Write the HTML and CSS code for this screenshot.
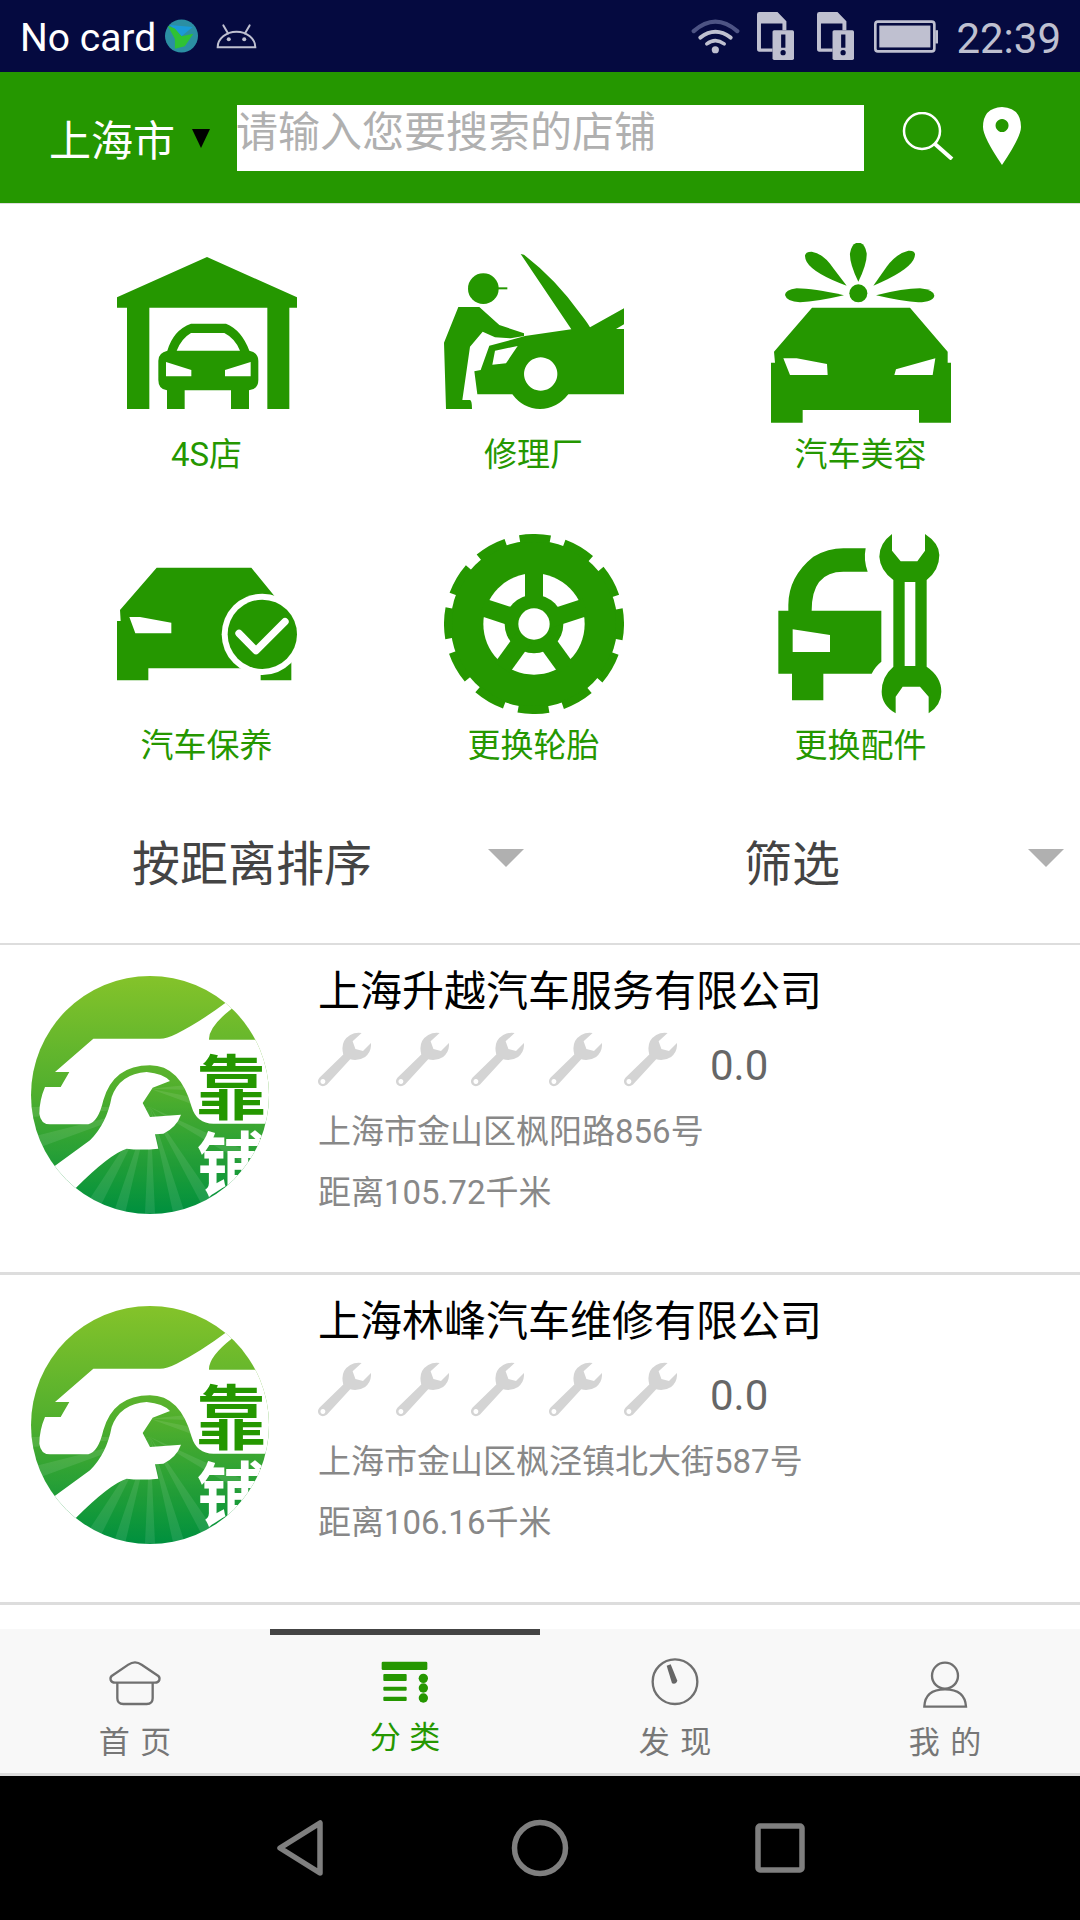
FILE: index.html
```html
<!DOCTYPE html>
<html lang="zh-CN">
<head>
    <meta charset="UTF-8">
    <meta name="viewport" content="width=device-width, initial-scale=1.0">
    <title>靠铺</title>
    <link rel="stylesheet" href="styles.css">
</head>

<body>
<svg class="defs" width="0" height="0">
    <defs>
        <symbol id="wrench" viewBox="52 213 153 159">
            <path fill="#d4d4d4" fill-rule="evenodd" d="M56 345 L125 278 Q115 240 145 222 Q160 213 178 216 L152 240 L160 262 L182 268 L205 245 Q207 270 188 285 Q168 298 145 292 L78 365 Q65 375 55 365 Q48 355 56 345 Z M66 349 A7 7 0 1 0 66.1 349 Z"/>
        </symbol>
        <linearGradient id="logo-bg" x1="0" y1="0" x2="0" y2="1">
            <stop offset="0" stop-color="#84c32a"/>
            <stop offset="0.5" stop-color="#4fae2e"/>
            <stop offset="1" stop-color="#00913f"/>
        </linearGradient>
        <clipPath id="logo-clip"><circle cx="450" cy="434" r="357"/></clipPath>
        <symbol id="logo" viewBox="93 77 714 714">
            <g clip-path="url(#logo-clip)">
                <rect x="93" y="77" width="714" height="714" fill="url(#logo-bg)"/>
                <g fill="#fff" opacity="0.09">
                    <polygon points="450,470 95,600 95,560"/>
                    <polygon points="450,470 95,500 95,470"/>
                    <polygon points="450,470 240,790 290,790"/>
                    <polygon points="450,470 340,790 375,790"/>
                    <polygon points="450,470 435,790 465,790"/>
                    <polygon points="450,470 520,790 555,790"/>
                    <polygon points="450,470 620,790 670,790"/>
                    <polygon points="450,470 800,680 800,630"/>
                    <polygon points="450,415 600,400 600,420"/>
                    <polygon points="450,415 600,445 600,470"/>
                </g>
                <path fill="#fff" d="M680 155 Q600 215 530 250 Q500 265 480 265 H280 L165 365 H208 L182 410 H135 Q118 450 118 490 Q122 522 150 522 H265 Q295 515 310 450 Q340 345 450 345 Q540 345 575 470 Q590 520 640 520 H820 V268 H627 Q625 230 695 175 L720 155 Z"/>
                <path fill="#fff" d="M160 650 L270 570 Q320 520 335 440 Q360 370 440 365 Q490 370 510 392 L458 412 L428 458 L450 500 L543 493 Q530 530 490 550 L465 552 L475 595 Q420 600 380 595 Q330 610 225 715 Z"/>
                <text class="logo-word" x="588" y="490" fill="#259700">靠</text>
                <text class="logo-word" x="590" y="722" fill="#fff">铺</text>
            </g>
        </symbol>
    </defs>
</svg>

<div class="app">
    <div class="statusbar">
        <span class="carrier">No card</span>
        <svg class="st-globe" viewBox="48 40 100 102">
            <circle cx="98" cy="91" r="50" fill="#2b8fa3"/>
            <polygon points="62,58 132,64 98,92" fill="#1b9bd8"/>
            <polygon points="56,60 78,68 98,92 134,84 108,122 78,130 78,100" fill="#2fc234"/>
        </svg>
        <svg class="st-droid" viewBox="200 58 122 74">
            <path d="M205 127 A56 46 0 0 1 317 127 Z" fill="none" stroke="#bfc0d0" stroke-width="6"/>
            <path d="M222 62 L236 86 M300 62 L286 86" stroke="#bfc0d0" stroke-width="6" stroke-linecap="round"/>
            <circle cx="238" cy="103" r="6" fill="#bfc0d0"/>
            <circle cx="284" cy="103" r="6" fill="#bfc0d0"/>
        </svg>
        <span class="st-spacer"></span>
        <svg class="st-wifi" viewBox="35 38 147 110">
            <path d="M42 78 Q108 20 175 78" fill="none" stroke="#4d5384" stroke-width="13" stroke-linecap="round"/>
            <path d="M62 98 Q108 62 155 98" fill="none" stroke="#bfc0d0" stroke-width="12" stroke-linecap="round"/>
            <path d="M82 117 Q108 97 135 117" fill="none" stroke="#bfc0d0" stroke-width="11" stroke-linecap="round"/>
            <circle cx="108" cy="135" r="11" fill="#bfc0d0"/>
        </svg>
        <svg class="st-sim" viewBox="233 20 112 145">
            <path fill="#bfc0d0" fill-rule="evenodd" d="M240 20 H295 L322 48 V75 H280 V140 H240 Q233 140 233 132 V27 Q233 20 240 20 Z M245 55 H310 V75 H280 V130 H245 Z"/>
            <rect x="280" y="75" width="65" height="90" rx="5" fill="#bfc0d0"/>
            <rect x="306" y="88" width="13" height="40" fill="#050a40"/>
            <circle cx="312" cy="143" r="8" fill="#050a40"/>
        </svg>
        <svg class="st-sim st-sim2" viewBox="233 20 112 145">
            <path fill="#bfc0d0" fill-rule="evenodd" d="M240 20 H295 L322 48 V75 H280 V140 H240 Q233 140 233 132 V27 Q233 20 240 20 Z M245 55 H310 V75 H280 V130 H245 Z"/>
            <rect x="280" y="75" width="65" height="90" rx="5" fill="#bfc0d0"/>
            <rect x="306" y="88" width="13" height="40" fill="#050a40"/>
            <circle cx="312" cy="143" r="8" fill="#050a40"/>
        </svg>
        <svg class="st-battery" viewBox="585 45 193 98">
            <rect x="589" y="49" width="178" height="90" rx="8" fill="none" stroke="#bfc0d0" stroke-width="8"/>
            <rect x="770" y="75" width="8" height="40" fill="#bfc0d0"/>
            <rect x="601" y="61" width="154" height="66" fill="#bfc0d0"/>
        </svg>
        <span class="clock">22:39</span>
    </div>

    <header class="topbar">
        <span class="city">上海市</span>
        <span class="city-arrow"></span>
        <div class="searchbox"><span class="placeholder">请输入您要搜索的店铺</span></div>
        <svg class="search-icon" viewBox="0 0 52 48">
            <circle cx="20" cy="19" r="18" fill="none" stroke="#fff" stroke-width="2.5"/>
            <path d="M33 32 L50 47" stroke="#fff" stroke-width="4"/>
        </svg>
        <svg class="pin-icon" viewBox="0 0 38 58">
            <path fill="#fff" fill-rule="evenodd" d="M19 0 Q38 1 38 20 Q38 30 19 58 Q0 30 0 20 Q0 1 19 0 Z M19 12 A6.5 6.5 0 1 0 19.1 12 Z"/>
        </svg>
    </header>

    <section class="categories">
        <div class="category">
            <svg class="cat-icon" viewBox="81 39 540 540">
                <path d="M351 81 L621 202 V233 H598 V537 H532 V233 H178 V537 H111 V233 H81 V202 Z"/>
                <path fill-rule="evenodd" d="M303 281 H408 Q455 300 478 362 Q505 368 505 392 V450 Q505 478 477 481 V537 H423 V481 H284 V537 H231 V481 Q205 478 205 450 V392 Q205 368 232 362 Q250 300 303 281 Z M303 309 H403 Q435 325 450 362 H260 Q275 325 303 309 Z M228 396 L304 420 V439 H228 Z M482 396 L405 420 V439 H482 Z"/>
            </svg>
            <p class="cat-name">4S店</p>
        </div>
        <div class="category">
            <svg class="cat-icon" viewBox="1062 39 540 540">
                <circle cx="1180" cy="176" r="46"/>
                <rect x="1220" y="172" width="32" height="6"/>
                <path d="M1105 231 H1168 L1228 285 L1302 310 V318 L1262 325 L1215 322 L1178 305 L1140 350 L1117 510 H1140 Q1146 512 1146 537 H1068 L1062 338 Z"/>
                <path fill-rule="evenodd" d="M1292 72 L1302 74 Q1400 150 1470 250 Q1490 275 1500 292 L1602 235 V493 H1435 Q1400 537 1350 537 Q1300 537 1267 493 H1162 L1153 424 L1172 420 L1198 347 L1262 330 L1305 318 L1444 298 Z M1352 382 A50 50 0 1 0 1352.1 382 Z M1215 362 L1283 348 L1248 400 L1207 404 Z M1578 297 L1602 283 V297 Z"/>
            </svg>
            <p class="cat-name">修理厂</p>
        </div>
        <div class="category">
            <svg class="cat-icon" viewBox="573 39 540 540">
                <circle cx="835" cy="190" r="27"/>
                <path d="M835 155 Q808 100 810 70 Q815 38 835 38 Q855 38 860 70 Q862 100 835 155 Z"/>
                <path d="M800 167 Q700 130 680 95 Q665 65 695 65 Q730 70 760 115 Z"/>
                <path d="M880 167 Q980 125 1000 90 Q1015 60 985 62 Q950 70 920 110 Z"/>
                <path d="M792 196 Q700 175 650 175 Q615 180 615 195 Q620 215 660 217 Q710 215 792 196 Z"/>
                <path d="M888 196 Q970 175 1020 175 Q1062 180 1063 197 Q1060 215 1015 217 Q970 215 888 196 Z"/>
                <path fill-rule="evenodd" d="M696 233 H990 L1103 365 V398 H1113 V578 H1017 V540 H668 V578 H573 V398 H585 L582 365 Z M610 385 L650 385 L741 402 L743 435 H630 Z M1066 385 L1058 435 H943 L948 418 Z"/>
            </svg>
            <p class="cat-name">汽车美容</p>
        </div>
        <div class="category">
            <svg class="cat-icon" viewBox="81 42 540 540">
                <path fill-rule="evenodd" d="M200 143 H484 L604 290 V481 H512 V445 H175 V481 H81 V303 H92 L90 270 Z M118 291 L150 291 L244 308 V340 H136 Z"/>
                <circle cx="517" cy="343" r="122" fill="#fff"/>
                <circle cx="517" cy="343" r="104"/>
                <path d="M447 340 L498 392 L585 305" fill="none" stroke="#fff" stroke-width="22" stroke-linecap="round" stroke-linejoin="round"/>
            </svg>
            <p class="cat-name">汽车保养</p>
        </div>
        <div class="category">
            <svg class="cat-icon" viewBox="1062 42 540 540">
                <circle cx="1332" cy="312" r="250"/>
                <circle cx="1332" cy="312" r="258" fill="none" stroke="#259700" stroke-width="24" stroke-dasharray="92 43.09" transform="rotate(-10 1332 312)"/>
                <circle cx="1332" cy="312" r="152" fill="#fff"/>
                <circle cx="1332" cy="312" r="88"/>
                <rect x="1305" y="150" width="54" height="162"/>
                <rect x="1305" y="150" width="54" height="162" transform="rotate(72 1332 312)"/>
                <rect x="1305" y="150" width="54" height="162" transform="rotate(144 1332 312)"/>
                <rect x="1305" y="150" width="54" height="162" transform="rotate(216 1332 312)"/>
                <rect x="1305" y="150" width="54" height="162" transform="rotate(288 1332 312)"/>
                <circle cx="1332" cy="312" r="47" fill="#fff"/>
            </svg>
            <p class="cat-name">更换轮胎</p>
        </div>
        <div class="category">
            <svg class="cat-icon" viewBox="573 42 540 540">
                <path fill-rule="evenodd" d="M595 272 H625 V255 Q625 170 700 110 Q745 85 790 85 H857 Q850 120 863 155 H790 Q695 155 695 272 H904 V425 Q885 440 875 461 H730 V541 H636 V461 H595 Z M638 328 L750 345 V396 H638 Z"/>
                <path fill-rule="evenodd" d="M936 42 Q898 70 898 110 Q900 150 940 180 V440 Q905 470 905 515 Q905 555 947 580 V530 L968 500 H1020 L1046 530 V580 Q1084 555 1084 515 Q1084 470 1040 440 V180 Q1078 150 1078 105 Q1078 70 1035 42 V92 L1012 124 H962 L936 92 Z M974 186 H1006 V438 H974 Z"/>
            </svg>
            <p class="cat-name">更换配件</p>
        </div>
    </section>

    <div class="sortbar">
        <div class="sort-cell"><span class="sort-label">按距离排序</span><span class="sort-arrow"></span></div>
        <div class="sort-cell"><span class="sort-label">筛选</span><span class="sort-arrow"></span></div>
    </div>

    <main class="shoplist">
        <article class="shop">
            <svg class="shop-logo"><use href="#logo"/></svg>
            <div class="shop-info">
                <h2 class="shop-name">上海升越汽车服务有限公司</h2>
                <div class="rating">
                    <svg class="wrench"><use href="#wrench"/></svg>
                    <svg class="wrench"><use href="#wrench"/></svg>
                    <svg class="wrench"><use href="#wrench"/></svg>
                    <svg class="wrench"><use href="#wrench"/></svg>
                    <svg class="wrench"><use href="#wrench"/></svg>
                    <span class="score">0.0</span>
                </div>
                <p class="shop-addr">上海市金山区枫阳路856号</p>
                <p class="shop-dist">距离105.72千米</p>
            </div>
        </article>
        <article class="shop">
            <svg class="shop-logo"><use href="#logo"/></svg>
            <div class="shop-info">
                <h2 class="shop-name">上海林峰汽车维修有限公司</h2>
                <div class="rating">
                    <svg class="wrench"><use href="#wrench"/></svg>
                    <svg class="wrench"><use href="#wrench"/></svg>
                    <svg class="wrench"><use href="#wrench"/></svg>
                    <svg class="wrench"><use href="#wrench"/></svg>
                    <svg class="wrench"><use href="#wrench"/></svg>
                    <span class="score">0.0</span>
                </div>
                <p class="shop-addr">上海市金山区枫泾镇北大街587号</p>
                <p class="shop-dist">距离106.16千米</p>
            </div>
        </article>
    </main>

    <nav class="tabbar">
        <div class="tab">
            <svg class="tab-icon" viewBox="45 24 180 150">
                <path class="tab-line" d="M135 37 Q125 37 115 44 L65 78 Q60 82 62 90 Q65 98 75 98 H195 Q205 98 208 90 Q210 82 205 78 L155 44 Q145 37 135 37 Z"/>
                <path class="tab-line" d="M82 98 V145 Q82 162 100 162 H170 Q188 162 188 145 V98"/>
            </svg>
            <span class="tab-name">首 页</span>
        </div>
        <div class="tab tab-active">
            <svg class="tab-icon" viewBox="855 24 180 150">
                <rect x="875" y="35" width="137" height="25" rx="4"/>
                <rect x="880" y="72" width="70" height="21" rx="3"/>
                <rect x="880" y="110" width="70" height="12" rx="3"/>
                <rect x="880" y="140" width="70" height="13" rx="3"/>
                <circle cx="1000" cy="85" r="14"/>
                <circle cx="1000" cy="114" r="14"/>
                <circle cx="1000" cy="144" r="14"/>
            </svg>
            <span class="tab-name">分 类</span>
        </div>
        <div class="tab">
            <svg class="tab-icon" viewBox="45 24 180 150">
                <circle class="tab-line" cx="135" cy="95" r="67"/>
                <path fill="#666" d="M110 47 L122 43 L142 92 Q138 104 126 100 Z"/>
            </svg>
            <span class="tab-name">发 现</span>
        </div>
        <div class="tab">
            <svg class="tab-icon" viewBox="855 24 180 150">
                <circle class="tab-line" cx="945" cy="77" r="39"/>
                <path class="tab-line" d="M883 170 Q885 118 945 118 Q1005 118 1008 170 Z"/>
            </svg>
            <span class="tab-name">我 的</span>
        </div>
    </nav>

    <div class="navbar">
        <svg class="nav-btn" viewBox="0 0 60 60">
            <path class="nav-line" d="M10 30 L50 5 V55 Z"/>
        </svg>
        <svg class="nav-btn" viewBox="0 0 60 60">
            <circle class="nav-line" cx="30" cy="30" r="25.5"/>
        </svg>
        <svg class="nav-btn" viewBox="0 0 60 60">
            <rect class="nav-line" x="8" y="8" width="44" height="44" rx="2"/>
        </svg>
    </div>
</div>
</body>
</html>
```

FILE: styles.css
```css
* {
    box-sizing: border-box;
}

body {
    margin: 0;
    padding: 0;
    background-color: #fff;
    font-family: Roboto, "Noto Sans CJK SC", sans-serif;
}

p, h2 {
    margin: 0;
}

.defs {
    display: block;
    height: 0;
}

.app {
    width: 1080px;
    height: 1920px;
    display: flex;
    flex-direction: column;
    overflow: hidden;
}

/* status bar */
.statusbar {
    height: 72px;
    flex: none;
    display: flex;
    align-items: center;
    padding-left: 20px;
    background-color: #050a40;
}

.carrier {
    font-size: 39px;
    color: #fff;
    width: 145px;
    margin-top: 4px;
    white-space: nowrap;
}

.st-globe {
    width: 33px;
    height: 34px;
}

.st-droid {
    width: 41px;
    height: 25px;
    margin-left: 18px;
    margin-top: 1px;
}

.st-spacer {
    flex: 1;
}

.st-wifi {
    width: 49px;
    height: 36px;
}

.st-sim {
    width: 37px;
    height: 48px;
    margin-left: 17px;
}

.st-sim2 {
    margin-left: 23px;
}

.st-battery {
    width: 64px;
    height: 33px;
    margin-left: 20px;
}

.clock {
    font-size: 42px;
    color: #bfc0d0;
    margin-left: 18px;
    margin-right: 19px;
    margin-top: 4px;
}

/* search header */
.topbar {
    height: 132px;
    flex: none;
    display: flex;
    align-items: center;
    background-color: #259700;
    border-bottom: 1px solid #ddd;
    padding-left: 49px;
}

.city {
    font-size: 42px;
    color: #fff;
    width: 143px;
    white-space: nowrap;
}

.city-arrow {
    width: 0;
    height: 0;
    border-left: 9px solid transparent;
    border-right: 9px solid transparent;
    border-top: 19px solid #000;
    margin-top: 1px;
}

.searchbox {
    width: 627px;
    height: 66px;
    margin-left: 27px;
    margin-top: 1px;
    background-color: #fff;
}

.placeholder {
    display: block;
    margin-left: -1px;
    font-size: 42px;
    line-height: 56px;
    color: #b0b0b0;
    white-space: nowrap;
}

.search-icon {
    width: 52px;
    height: 48px;
    margin-left: 38px;
    margin-top: -3px;
}

.pin-icon {
    width: 38px;
    height: 58px;
    margin-left: 29px;
    margin-top: -4px;
}

/* category grid */
.categories {
    flex: none;
    display: grid;
    grid-template-columns: repeat(3, 327px);
    row-gap: 56px;
    padding: 39px 0 0 43px;
}

.category {
    display: flex;
    flex-direction: column;
    align-items: center;
}

.cat-icon {
    width: 180px;
    height: 180px;
    fill: #259700;
}

.cat-name {
    margin-top: 9px;
    font-size: 33px;
    line-height: 46px;
    color: #259700;
    white-space: nowrap;
}

/* sort bar */
.sortbar {
    flex: none;
    height: 174px;
    padding-top: 8px;
    display: grid;
    grid-template-columns: 540px 540px;
}

.sort-cell {
    display: flex;
    align-items: center;
}

.sort-label {
    width: 488px;
    padding-left: 16px;
    text-align: center;
    font-size: 48px;
    color: #444;
}

.sort-arrow {
    width: 0;
    height: 0;
    border-left: 18px solid transparent;
    border-right: 18px solid transparent;
    border-top: 18px solid #b0b0b0;
    margin-top: -4px;
}

/* shop list */
.shoplist {
    flex: 1;
    border-top: 2px solid #ddd;
}

.shop {
    height: 330px;
    display: flex;
    border-bottom: 3px solid #ddd;
}

.shop-logo {
    width: 238px;
    height: 238px;
    flex: none;
    margin: 31px 0 0 31px;
}

.logo-word {
    font-family: "Noto Sans CJK SC", sans-serif;
    font-size: 210px;
    font-weight: 700;
}

.shop-info {
    margin-left: 49px;
    padding-top: 17px;
}

.shop-name {
    font-size: 42px;
    line-height: 60px;
    font-weight: 400;
    color: #000;
    white-space: nowrap;
}

.rating {
    display: flex;
    align-items: flex-end;
    height: 55px;
    margin-top: 10px;
}

.wrench {
    width: 53px;
    height: 55px;
    margin-right: 22px;
}

.wrench:nth-child(odd) {
    margin-right: 25px;
}

.wrench:nth-child(5) {
    margin-right: 33px;
}

.score {
    font-size: 42px;
    line-height: 46px;
    margin-bottom: -2px;
    color: #666;
}

.shop-addr,
.shop-dist {
    font-size: 33px;
    line-height: 50px;
    color: #888;
    white-space: nowrap;
}

.shop-addr {
    margin-top: 20px;
}

.shop-dist {
    margin-top: 11px;
}

/* bottom tabs */
.tabbar {
    flex: none;
    height: 147px;
    display: grid;
    grid-template-columns: repeat(4, 270px);
    background-color: #f8f8f8;
    border-bottom: 3px solid #ddd;
}

.tab {
    display: flex;
    flex-direction: column;
    align-items: center;
    border-top: 6px solid transparent;
    padding-top: 23px;
}

.tab-active {
    border-top-color: #444;
}

.tab-icon {
    width: 60px;
    height: 50px;
    fill: #259700;
}

.tab-line {
    fill: none;
    stroke: #707070;
    stroke-width: 7;
}

.tab-name {
    margin-top: 15px;
    font-size: 31px;
    line-height: 40px;
    word-spacing: 3px;
    color: #777;
    white-space: nowrap;
}

.tab-active .tab-name {
    margin-top: 10px;
    word-spacing: 1px;
    color: #259700;
}

/* android nav */
.navbar {
    flex: none;
    height: 144px;
    display: flex;
    justify-content: center;
    align-items: center;
    background-color: #000;
}

.nav-btn {
    width: 60px;
    height: 60px;
    margin: 0 90px;
}

.nav-line {
    fill: none;
    stroke: #7f7f7f;
    stroke-width: 5.5;
    stroke-linejoin: round;
}
```
